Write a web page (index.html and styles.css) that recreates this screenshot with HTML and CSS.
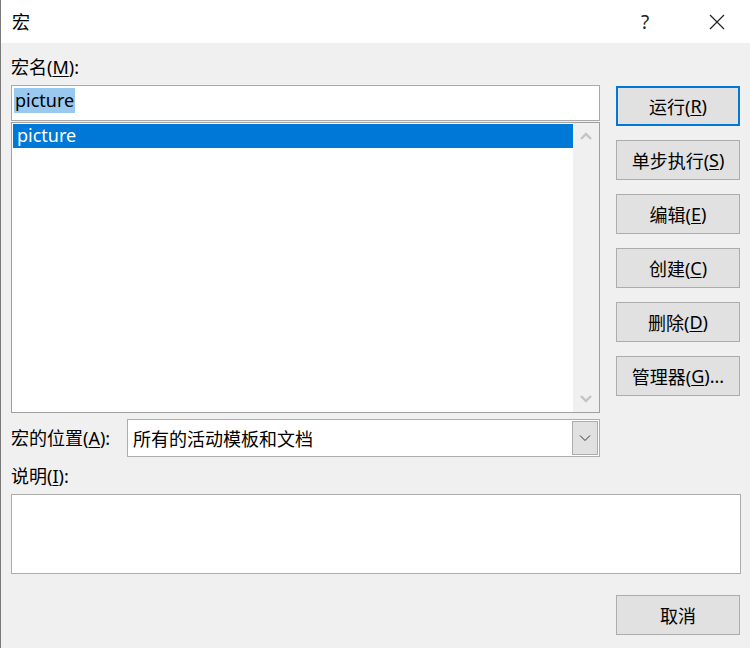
FILE: index.html
```html
<!DOCTYPE html>
<html lang="zh-CN">
  <head>
    <meta charset="UTF-8" />
    <title>宏</title>
    <link rel="stylesheet" href="styles.css">
  </head>
  <body>
    <div class="window">
      <div class="titlebar">
        <span class="title">宏</span>
        <span class="help">?</span>
        <span class="close">
          <svg width="16" height="16" viewBox="0 0 16 16">
            <path d="M1 1 L15 15 M15 1 L1 15" stroke="#222" stroke-width="1.2" fill="none" />
          </svg>
        </span>
      </div>

      <div class="dialog">
        <div class="top">
          <div class="left">
            <div class="label">宏名(<u>M</u>):</div>
            <div class="name-input"><span class="sel">picture</span></div>
            <div class="listbox">
              <div class="items">
                <div class="item selected">picture</div>
              </div>
              <div class="scrollbar">
                <svg width="14" height="10" viewBox="0 0 14 10">
                  <path d="M2 8 L7 3 L12 8" stroke="#c4c4c4" stroke-width="2.4" fill="none" />
                </svg>
                <svg width="14" height="10" viewBox="0 0 14 10">
                  <path d="M2 2 L7 7 L12 2" stroke="#c4c4c4" stroke-width="2.4" fill="none" />
                </svg>
              </div>
            </div>
            <div class="location">
              <div class="label">宏的位置(<u>A</u>):</div>
              <div class="combo">
                <span class="combo-text">所有的活动模板和文档</span>
                <span class="combo-btn">
                  <svg width="12" height="8" viewBox="0 0 12 8">
                    <path d="M1 1.5 L6 6.5 L11 1.5" stroke="#333" stroke-width="1" fill="none" />
                  </svg>
                </span>
              </div>
            </div>
          </div>

          <div class="buttons">
            <div class="btn default">运行(<u>R</u>)</div>
            <div class="btn">单步执行(<u>S</u>)</div>
            <div class="btn">编辑(<u>E</u>)</div>
            <div class="btn">创建(<u>C</u>)</div>
            <div class="btn">删除(<u>D</u>)</div>
            <div class="btn">管理器(<u>G</u>)...</div>
          </div>
        </div>

        <div class="label desc-label">说明(<u>I</u>):</div>
        <div class="desc"></div>

        <div class="footer">
          <div class="btn">取消</div>
        </div>
      </div>
    </div>
  </body>
</html>
```

FILE: styles.css
```css
body {
  margin: 0;
  background: #f0f0f0;
  font-family: "Noto Sans", "Noto Sans CJK SC", sans-serif;
  font-size: 18px;
  color: #000;
}

.window {
  width: 750px;
  height: 648px;
  border-left: 1px solid #7a7a7a;
  box-sizing: border-box;
  background: #f0f0f0;
  overflow: hidden;
}

/* title bar */
.titlebar {
  height: 43px;
  background: #fff;
  display: flex;
  align-items: center;
  padding-left: 11px;
}
.title {
  flex: 1;
  line-height: 24px;
}
.help {
  width: 20px;
  text-align: center;
  margin-right: 54px;
  font-size: 19px;
  color: #222;
}
.close {
  display: flex;
  margin-right: 25px;
}

/* dialog body */
.dialog {
  padding: 12px 10px 0 10px;
}
.top {
  display: flex;
}
.left {
  width: 590px;
}
.label {
  height: 24px;
  line-height: 24px;
}
u {
  text-decoration-thickness: 1px;
  text-underline-offset: 2px;
}

.name-input {
  margin-top: 6px;
  height: 36px;
  box-sizing: border-box;
  border: 1px solid #a9a9a9;
  background: #fff;
  padding: 2px 0 0 2px;
}
.sel {
  display: inline-block;
  background: #99c9ef;
  height: 25px;
  line-height: 25px;
  padding: 0 1px;
}

.listbox {
  margin-top: 1px;
  height: 291px;
  box-sizing: border-box;
  border: 1px solid #a0a0a0;
  background: #fff;
  display: flex;
  padding: 1px 0 1px 1px;
}
.items {
  flex: 1;
}
.item {
  height: 24px;
  line-height: 23px;
  padding-left: 4px;
}
.item.selected {
  background: #0078d7;
  color: #fff;
}
.scrollbar {
  width: 26px;
  background: #f0f0f0;
  display: flex;
  flex-direction: column;
  justify-content: space-between;
  align-items: center;
  padding: 8px 0;
  margin-top: -1px;
  margin-bottom: -1px;
}

.location {
  margin-top: 6px;
  display: flex;
  align-items: center;
}
.location .label {
  width: 116px;
}
.combo {
  flex: 1;
  height: 38px;
  box-sizing: border-box;
  border: 1px solid #adadad;
  background: #fff;
  display: flex;
  align-items: center;
  padding: 1px;
}
.combo-text {
  flex: 1;
  padding-left: 4px;
}
.combo-btn {
  width: 26px;
  height: 34px;
  box-sizing: border-box;
  background: #e1e1e1;
  border: 1px solid #adadad;
  display: flex;
  align-items: center;
  justify-content: center;
}

/* buttons */
.buttons {
  margin-left: 16px;
  padding-top: 31px;
  display: flex;
  flex-direction: column;
  gap: 14px;
}
.btn {
  width: 124px;
  height: 40px;
  box-sizing: border-box;
  background: #e1e1e1;
  border: 1px solid #adadad;
  display: flex;
  align-items: center;
  justify-content: center;
}
.btn.default {
  border: 2px solid #0078d7;
}

.desc-label {
  margin-top: 7px;
}
.desc {
  margin-top: 6px;
  width: 730px;
  height: 80px;
  box-sizing: border-box;
  border: 1px solid #adadad;
  background: #fff;
}

.footer {
  display: flex;
  justify-content: flex-end;
  margin-top: 21px;
}
```
